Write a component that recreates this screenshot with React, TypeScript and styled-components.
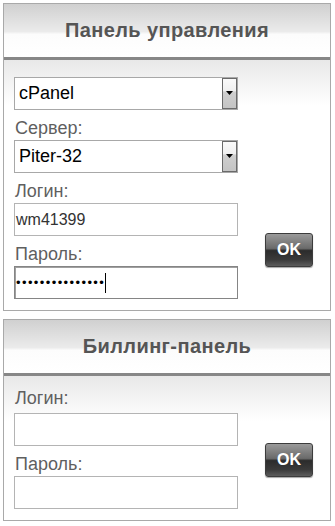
import React from 'react'
import styled, { createGlobalStyle } from 'styled-components'

const GlobalStyle = createGlobalStyle`
  body {
    margin: 0;
    background: #fff;
    font-family: 'Liberation Sans', Arial, sans-serif;
  }
`

const Page = styled.div`
  width: 335px;
  padding: 3px 4px 4px 3px;
  box-sizing: border-box;
  display: flex;
  flex-direction: column;
  gap: 8px;
`

const Panel = styled.div`
  border: 1px solid #a9a9a9;
  background: #fff;
`

const Header = styled.div`
  height: 56px;
  display: flex;
  align-items: center;
  justify-content: center;
  background: linear-gradient(180deg, #d0d0d0 0%, #ebebeb 52%, #fcfcfc 57%, #fff 100%);
  border-bottom: 3px solid #878787;
  color: #555;
  font-size: 20px;
  font-weight: bold;
  letter-spacing: 0.4px;
  box-sizing: border-box;
`

const Body = styled.div<{ $top: number }>`
  display: flex;
  padding: ${p => p.$top}px 0 11px 10px;
  background: linear-gradient(180deg, #e8e8e8 0px, #f5f5f5 26px, #fff 46px);
`

const Fields = styled.div`
  width: 224px;
  display: flex;
  flex-direction: column;
`

const Label = styled.div<{ $first?: boolean }>`
  color: #5f5f5f;
  font-size: 18px;
  line-height: 21px;
  padding: ${p => (p.$first ? '0 0 4px 1px' : '8px 0 1px 1px')};
`

const SelectBox = styled.div`
  height: 33px;
  box-sizing: border-box;
  border: 1px solid #a8a8a8;
  background: #fff;
  display: flex;
  align-items: stretch;
`

const SelectValue = styled.div`
  flex: 1;
  display: flex;
  align-items: center;
  padding-left: 4px;
  font-size: 18px;
  color: #000;
`

const Arrow = styled.div`
  width: 15px;
  border: 1px solid #6a6a6a;
  background: linear-gradient(180deg, #fafafa 0%, #f0f0f0 40%, #cfcfcf 45%, #c4c4c4 100%);
  display: flex;
  justify-content: center;
  padding-top: 12px;
  box-sizing: border-box;
`

const Input = styled.div<{ $focus?: boolean }>`
  height: 33px;
  box-sizing: border-box;
  border: 1px solid ${p => (p.$focus ? '#858585' : '#b4b4b4')};
  box-shadow: ${p => (p.$focus ? 'inset 1px 1px 0 #a0a0a0' : 'none')};
  background: #fff;
  display: flex;
  align-items: center;
  padding-left: 1px;
  font-size: 16px;
  color: #333;
`

const Dots = styled.span`
  font-size: 13px;
  letter-spacing: 1.4px;
  color: #000;
`

const Caret = styled.span`
  display: inline-block;
  width: 1px;
  height: 20px;
  background: #000;
`

const ButtonCell = styled.div`
  align-self: flex-end;
  padding: 0 0 32px 27px;
`

const OkButton = styled.button`
  display: block;
  width: 48px;
  height: 34px;
  border: 1px solid #3c3c3c;
  border-radius: 3px;
  background: linear-gradient(180deg, #9a9a9a 0%, #6a6a6a 45%, #2c2c2c 52%, #3a3a3a 80%, #5c5c5c 100%);
  color: #fff;
  font-family: 'Liberation Sans', Arial, sans-serif;
  font-weight: bold;
  font-size: 16px;
  padding: 0;
  box-shadow: 0 1px 1px rgba(0, 0, 0, 0.35);
`

function Select({ value }: { value: string }) {
  return (
    <SelectBox>
      <SelectValue>{value}</SelectValue>
      <Arrow>
        <svg width="7" height="4" viewBox="0 0 7 4">
          <path d="M0 0h7L3.5 4z" fill="#000" />
        </svg>
      </Arrow>
    </SelectBox>
  )
}

export default function App() {
  return (
    <>
      <GlobalStyle />
      <Page>
        <Panel>
          <Header>Панель управления</Header>
          <Body $top={17}>
            <Fields>
              <Select value="cPanel" />
              <Label>Сервер:</Label>
              <Select value="Piter-32" />
              <Label>Логин:</Label>
              <Input>wm41399</Input>
              <Label>Пароль:</Label>
              <Input $focus>
                <Dots>•••••••••••••••</Dots>
                <Caret />
              </Input>
            </Fields>
            <ButtonCell>
              <OkButton>OK</OkButton>
            </ButtonCell>
          </Body>
        </Panel>
        <Panel>
          <Header>Биллинг-панель</Header>
          <Body $top={12}>
            <Fields>
              <Label $first>Логин:</Label>
              <Input />
              <Label>Пароль:</Label>
              <Input />
            </Fields>
            <ButtonCell>
              <OkButton>OK</OkButton>
            </ButtonCell>
          </Body>
        </Panel>
      </Page>
    </>
  )
}
